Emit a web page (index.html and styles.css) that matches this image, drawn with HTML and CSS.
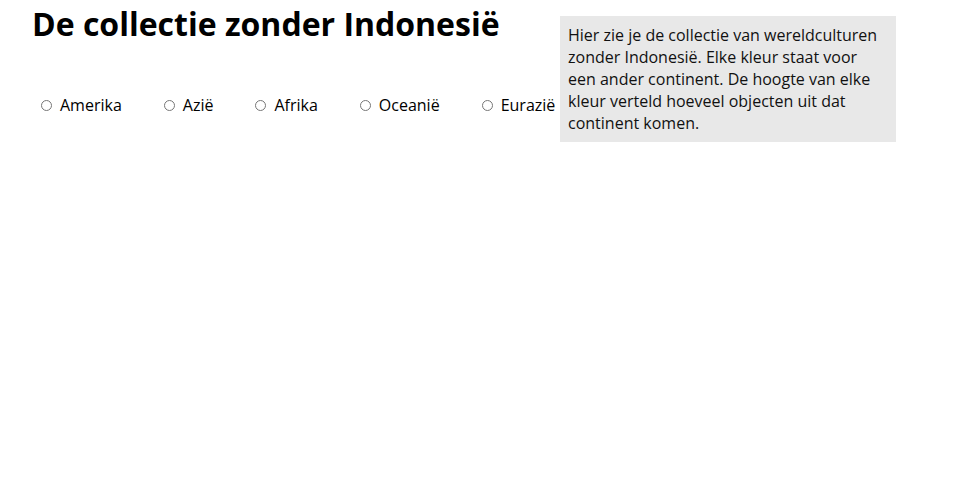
FILE: index.html
```html
<!DOCTYPE html>
<html lang="nl">
<head>
    <meta charset="UTF-8">
    <meta name="viewport" content="width=device-width, initial-scale=1.0">
    <title>De collectie zonder Indonesië</title>
    <link rel="stylesheet" href="styles.css">
</head>
<body>
    <div class="page">
        <div class="main">
            <h1>De collectie zonder Indonesië</h1>
            <form class="filters">
                <label><input type="radio" name="continent" value="amerika">Amerika</label>
                <label><input type="radio" name="continent" value="azie">Azië</label>
                <label><input type="radio" name="continent" value="afrika">Afrika</label>
                <label><input type="radio" name="continent" value="oceanie">Oceanië</label>
                <label><input type="radio" name="continent" value="eurazie">Eurazië</label>
            </form>
        </div>
        <p class="info">Hier zie je de collectie van wereldculturen zonder Indonesië. Elke kleur staat voor een ander continent. De hoogte van elke kleur verteld hoeveel objecten uit dat continent komen.</p>
    </div>
</body>
</html>
```

FILE: styles.css
```css
body {
    margin: 0;
    font-family: "Open Sans", sans-serif;
    color: #000;
    background-color: #fff;
}
.page {
    display: flex;
    align-items: flex-start;
    padding: 0 32px;
}
.main {
    width: 528px;
}
h1 {
    font-size: 32px;
    font-weight: bold;
    margin: 0;
    padding-top: 2px;
    line-height: 44px;
}
.filters {
    display: flex;
    margin-top: 48px;
    padding-left: 9px;
}
.filters label {
    display: flex;
    align-items: center;
    font-size: 16px;
    margin-right: 42px;
    white-space: nowrap;
}
.filters label:last-child {
    margin-right: 0;
}
.filters input {
    width: 11px;
    height: 11px;
    margin: 0 8px 0 0;
}
.info {
    width: 320px;
    margin: 16px 0 0 0;
    padding: 8px;
    background-color: #e8e8e8;
    font-size: 16px;
    line-height: 22px;
    color: #111;
}
```
